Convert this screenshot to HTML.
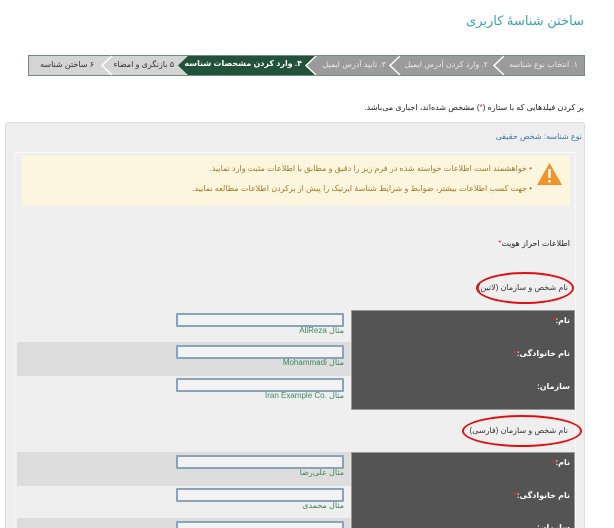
<!DOCTYPE html>
<html><head><meta charset="utf-8"><style>
*{margin:0;padding:0;box-sizing:border-box}
html,body{width:614px;height:528px;overflow:hidden}
body{background:#fff;position:relative;font-family:"Liberation Sans","DejaVu Sans",sans-serif;direction:rtl}
.a{position:absolute;white-space:nowrap}
.t{font-size:8px}
.inp{position:absolute;left:176px;width:168px;height:14px;border:2px solid #8aa3b8;background:#f2f2f2;border-radius:1px}
.ex{position:absolute;left:176px;width:168px;text-align:right;font-size:8px;color:#3a8a5a}
.lbl{position:absolute;right:44px;font-size:8px;color:#fff;font-weight:bold}
.st{color:#e22}
</style></head><body>
<div class="a" style="right:30px;top:13px;font-size:13px;color:#3aa4b0">ساختن شناسهٔ کاربری</div>

<svg class="a" style="left:0;top:0" width="614" height="90">
<rect x="28.5" y="55.5" width="556" height="20" fill="#9b9b9b" stroke="#6f8f78"/>
<polygon points="29,56 112,56 102,65.5 112,75 29,75" fill="#d4d4d4"/>
<polygon points="112,56 188,56 178,65.5 188,75 112,75 102,65.5" fill="#d4d4d4"/>
<polygon points="188,56 316,56 306,65.5 316,75 188,75 178,65.5" fill="#23523a"/>
<g fill="none" stroke="#fff" stroke-width="1.5">
<polyline points="112,56 102,65.5 112,75"/>
<polyline points="316,56 306,65.5 316,75"/>
<polyline points="400,56 390,65.5 400,75"/>
<polyline points="504,56 494,65.5 504,75"/>
</g>
</svg>
<div class="a t" style="right:36px;top:60px;color:#e8e8e8">١. انتخاب نوع شناسه</div>
<div class="a t" style="right:126px;top:60px;color:#e8e8e8">٢. وارد کردن آدرس ایمیل</div>
<div class="a t" style="right:228px;top:60px;color:#e8e8e8">٣. تایید آدرس ایمیل</div>
<div class="a t" style="right:312px;top:59px;color:#fff;font-weight:bold">۴. وارد کردن مشخصات شناسه</div>
<div class="a t" style="right:440px;top:60px;color:#333">۵ بازنگری و امضاء</div>
<div class="a t" style="right:520px;top:60px;color:#333">۶ ساختن شناسه</div>

<div class="a t" style="right:30px;top:103px;color:#222">پر کردن فیلدهایی که با ستاره (<span class="st">*</span>) مشخص شده‌اند، اجباری می‌باشد.</div>

<div class="a" style="left:5px;top:122px;width:580px;height:420px;background:#eee;border:1px solid #ddd;border-radius:3px"></div>
<div class="a t" style="right:32px;top:132px;color:#3a78b0">نوع شناسه: شخص حقیقی</div>
<div class="a" style="left:14px;top:152px;width:562px;height:390px;background:#efefef;border:1px solid #f8f8f8"></div>
<div class="a" style="left:22px;top:156px;width:548px;height:50px;background:#fdf6de;border-radius:2px"></div>
<svg class="a" style="left:536px;top:162px" width="27" height="24"><polygon points="13.5,1 26,23 1,23" fill="#f0932b"/><rect x="12.3" y="7" width="2.4" height="9" fill="#fff"/><rect x="12.3" y="18" width="2.4" height="2.4" fill="#fff"/></svg>
<div class="a t" style="right:82px;top:164px;color:#a07a2a">• خواهشمند است اطلاعات خواسته شده در فرم زیر را دقیق و مطابق با اطلاعات مثبت وارد نمایید.</div>
<div class="a t" style="right:82px;top:184px;color:#a07a2a">• جهت کسب اطلاعات بیشتر، ضوابط و شرایط شناسهٔ ایرتیک را پیش از پرکردن اطلاعات مطالعه نمایید.</div>

<div class="a t" style="right:44px;top:239px;color:#222">اطلاعات احراز هویت<span class="st">*</span></div>

<div class="a" style="left:476px;top:272px;width:98px;height:32px;border:2px solid #e01010;border-radius:50%"></div>
<div class="a t" style="right:46px;top:283px;color:#333">نام شخص و سازمان (لاتین)</div>

<div class="a" style="left:17px;top:342px;width:334px;height:34px;background:#ddd"></div>
<div class="a" style="left:351px;top:310px;width:224px;height:100px;background:#545454;border:1px solid #999"></div>
<div class="lbl" style="top:316px">نام:<span class="st">*</span></div>
<div class="lbl" style="top:349px">نام خانوادگی:<span class="st">*</span></div>
<div class="lbl" style="top:382px">سازمان:</div>
<div class="inp" style="top:313px"></div><div class="ex" style="top:326px">مثال <span dir="ltr">AliReza</span></div>
<div class="inp" style="top:345px"></div><div class="ex" style="top:358px">مثال <span dir="ltr">Mohammadi</span></div>
<div class="inp" style="top:378px"></div><div class="ex" style="top:391px">مثال <span dir="ltr">Iran Example Co.</span></div>

<div class="a" style="left:462px;top:415px;width:120px;height:32px;border:2px solid #e01010;border-radius:50%"></div>
<div class="a t" style="right:46px;top:426px;color:#333">نام شخص و سازمان (فارسی)</div>

<div class="a" style="left:17px;top:452px;width:334px;height:34px;background:#ddd"></div>
<div class="a" style="left:17px;top:518px;width:334px;height:20px;background:#ddd"></div>
<div class="a" style="left:351px;top:452px;width:224px;height:90px;background:#545454;border:1px solid #999"></div>
<div class="lbl" style="top:458px">نام:<span class="st">*</span></div>
<div class="lbl" style="top:491px">نام خانوادگی:<span class="st">*</span></div>
<div class="lbl" style="top:523px">سازمان:</div>
<div class="inp" style="top:455px"></div><div class="ex" style="top:468px">مثال علی‌رضا</div>
<div class="inp" style="top:488px"></div><div class="ex" style="top:501px">مثال محمدی</div>
<div class="inp" style="top:521px"></div>
</body></html>
